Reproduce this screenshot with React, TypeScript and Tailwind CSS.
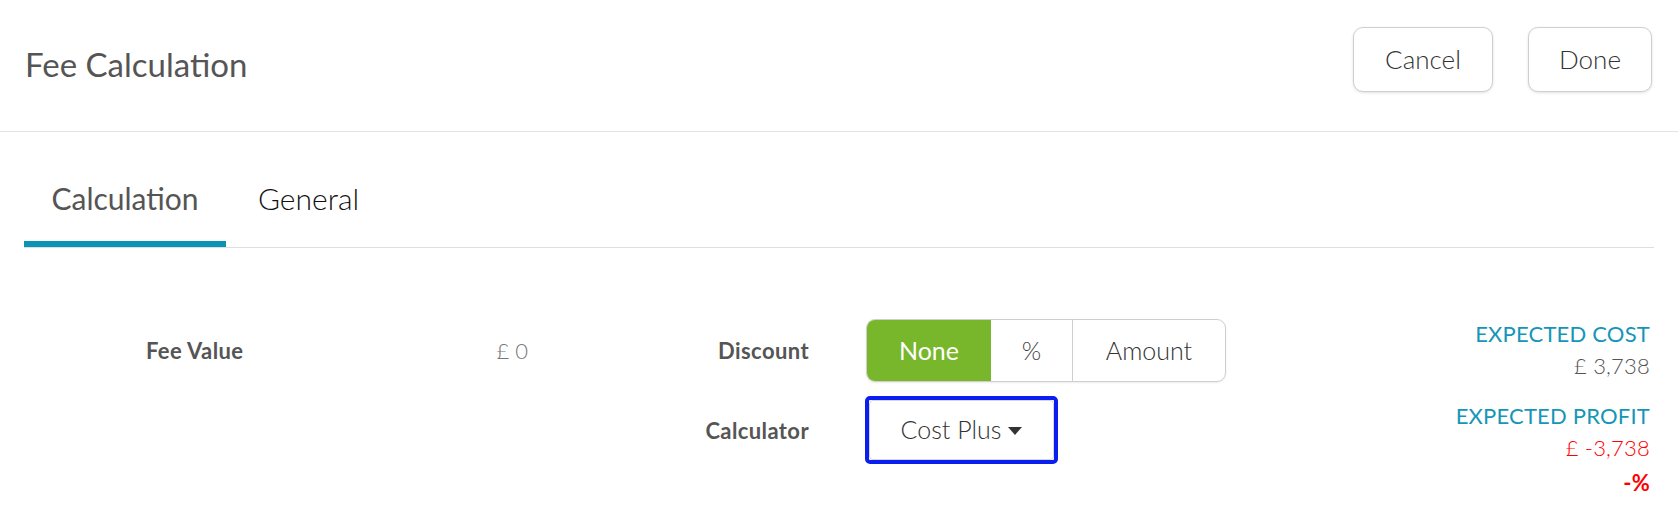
import React from "react";

const font = { fontFamily: "Lato, 'Open Sans', sans-serif" };

const HeaderButton = ({ label, width }: { label: string; width: string }) => (
  <button
    className={`h-[65px] ${width} rounded-[10px] border border-[#cfcfcf] bg-white text-[26px] font-light text-[#333] shadow-[0_1px_3px_rgba(0,0,0,0.12)]`}
  >
    {label}
  </button>
);

const Caret = () => (
  <svg width="14" height="8" viewBox="0 0 14 8" className="ml-[7px] mt-[2px]">
    <path d="M0 0 L14 0 L7 8 Z" fill="#333" />
  </svg>
);

const App = () => {
  return (
    <div className="w-[1678px] h-[513px] bg-white overflow-hidden" style={font}>
      {/* header */}
      <div className="h-[132px] border-b border-[#e3e3e3] flex justify-between pl-[25px] pr-[26px]">
        <h1 className="self-center text-[33px] text-[#555] font-normal leading-none -mt-[3px]">
          Fee Calculation
        </h1>
        <div className="flex gap-[35px] mt-[27px]">
          <HeaderButton label="Cancel" width="w-[140px]" />
          <HeaderButton label="Done" width="w-[124px]" />
        </div>
      </div>

      {/* tabs */}
      <div className="mx-[24px] pt-[48px] border-b border-[#dedede] flex">
        <div className="w-[202px] text-center text-[30px] leading-[36px] text-[#555] pb-[25px] border-b-[6px] border-[#0b93b6]">
          Calculation
        </div>
        <div className="px-[32px] text-[30px] leading-[36px] font-light text-[#111] pb-[31px]">General</div>
      </div>

      {/* form */}
      <div className="flex pl-[146px] pr-[28px] mt-[71px]">
        <div className="w-[382px] h-[63px] flex items-center justify-between">
          <span className="text-[22px] font-bold tracking-[0.4px] text-[#555]">Fee Value</span>
          <span className="text-[22px] font-light text-[#777]">£ 0</span>
        </div>

        <div className="flex flex-col gap-[14px]">
          <div className="flex items-center">
            <span className="w-[281px] text-right text-[22px] font-bold tracking-[0.4px] text-[#555]">Discount</span>
            <div className="ml-[57px] flex h-[63px] rounded-[9px] border border-[#cfcfcf] overflow-hidden shadow-[0_1px_2px_rgba(0,0,0,0.08)]">
              <div className="w-[124px] bg-[#78b72b] text-white text-[25px] flex items-center justify-center">
                None
              </div>
              <div className="w-[82px] border-r border-[#cfcfcf] text-[#444] font-light text-[25px] flex items-center justify-center">
                %
              </div>
              <div className="w-[152px] text-[#333] font-light text-[25px] flex items-center justify-center">
                Amount
              </div>
            </div>
          </div>
          <div className="flex items-center">
            <span className="w-[281px] text-right text-[22px] font-bold tracking-[0.4px] text-[#555]">Calculator</span>
            <div className="ml-[56px] w-[193px] h-[68px] rounded-[5px] border-[4px] border-[#0a1ef0]">
              <div className="w-full h-full rounded-[4px] border border-[#d6d6d6] bg-white flex items-center justify-center text-[25px] font-light text-[#333]">
                Cost Plus
                <Caret />
              </div>
            </div>
          </div>
        </div>

        <div className="flex-1 flex flex-col items-end -mt-[1px] text-[22px] leading-[32px] tracking-[0.2px]">
          <span className="text-[#1596b8]">EXPECTED COST</span>
          <span className="text-[#555] font-light">£ 3,738</span>
          <span className="text-[#1596b8] mt-[18px]">EXPECTED PROFIT</span>
          <span className="text-[#ff0000] font-light">£ -3,738</span>
          <span className="text-[#ff0000] font-bold mt-[3px]">-%</span>
        </div>
      </div>
    </div>
  );
};

export default App;
